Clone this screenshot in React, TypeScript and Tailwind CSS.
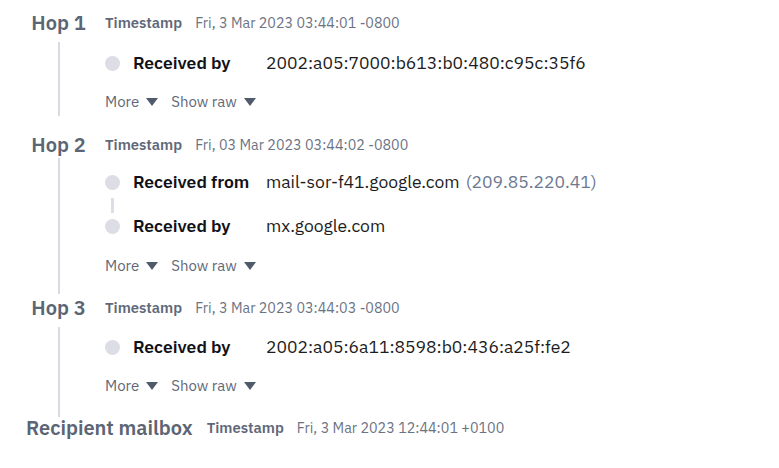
import React from "react";

const font = { fontFamily: '"IBM Plex Sans", "Noto Sans", "Liberation Sans", sans-serif' };

function Tri() {
  return (
    <svg width="12" height="8" viewBox="0 0 12 8" className="inline-block">
      <path d="M0 0 L12 0 L6 8 Z" fill="#4f5b6b" />
    </svg>
  );
}

function Header({ label, ts }: { label: string; ts: string }) {
  return (
    <div className="flex items-center h-[22px] gap-[14px]">
      <div className="min-w-[65px] text-center text-[20px] leading-[22px] font-semibold text-[#5b6574] whitespace-nowrap">
        {label}
      </div>
      <div className="flex items-center gap-[13px] leading-[16px] whitespace-nowrap">
        <span className="text-[14.8px] font-semibold text-[#5f6878]">Timestamp</span>
        <span className="text-[14.3px] text-[#6b7383]">{ts}</span>
      </div>
    </div>
  );
}

function Row({ label, value, extra }: { label: string; value: string; extra?: string }) {
  return (
    <div className="flex items-center h-[28px]">
      <div className="w-[15px] h-[15px] rounded-full bg-[#dcdde5]" />
      <div className="ml-[13px] w-[133px] text-[17.5px] font-semibold text-[#111118] whitespace-nowrap">{label}</div>
      <div className="text-[17.5px] text-[#1c1c21] whitespace-nowrap">
        {value}
        {extra && <span className="ml-[6px] text-[#6c7990]">{extra}</span>}
      </div>
    </div>
  );
}

function Connector() {
  return (
    <div className="h-[16px] w-[15px] flex justify-center">
      <div className="w-[3px] h-[15px] mt-[2px] bg-[#dcdde5]" />
    </div>
  );
}

function MoreRow() {
  return (
    <div className="flex items-center h-[20px] text-[15px] text-[#5f6878] whitespace-nowrap">
      <span>More</span>
      <span className="ml-[7px] flex items-center"><Tri /></span>
      <span className="ml-[13px]">Show raw</span>
      <span className="ml-[7px] flex items-center"><Tri /></span>
    </div>
  );
}

function Body({
  children,
  lineClass,
}: {
  children: React.ReactNode;
  lineClass: string;
}) {
  return (
    <div className="flex gap-[14px]">
      <div className="w-[65px] flex justify-center">
        <div className={"w-[2px] bg-[#d8dbe2] " + lineClass} />
      </div>
      <div className="flex flex-col">{children}</div>
    </div>
  );
}

export default function App() {
  return (
    <div className="w-[779px] h-[468px] bg-white pl-[26px] pt-[12px]" style={font}>
      <Header label="Hop 1" ts="Fri, 3 Mar 2023 03:44:01 -0800" />
      <Body lineClass="mt-[8px] mb-[18px]">
        <div className="pt-[15px]">
          <Row label="Received by" value="2002:a05:7000:b613:b0:480:c95c:35f6" />
        </div>
        <div className="mt-[15px] pb-[22px]">
          <MoreRow />
        </div>
      </Body>

      <Header label="Hop 2" ts="Fri, 03 Mar 2023 03:44:02 -0800" />
      <Body lineClass="mt-[2px] mb-[3px]">
        <div className="pt-[12px]">
          <Row label="Received from" value="mail-sor-f41.google.com" extra="(209.85.220.41)" />
        </div>
        <Connector />
        <Row label="Received by" value="mx.google.com" />
        <div className="mt-[16px] pb-[21px]">
          <MoreRow />
        </div>
      </Body>

      <Header label="Hop 3" ts="Fri, 3 Mar 2023 03:44:03 -0800" />
      <Body lineClass="mt-[8px]">
        <div className="pt-[14px]">
          <Row label="Received by" value="2002:a05:6a11:8598:b0:436:a25f:fe2" />
        </div>
        <div className="mt-[15px] pb-[21px]">
          <MoreRow />
        </div>
      </Body>

      <Header label="Recipient mailbox" ts="Fri, 3 Mar 2023 12:44:01 +0100" />
    </div>
  );
}
